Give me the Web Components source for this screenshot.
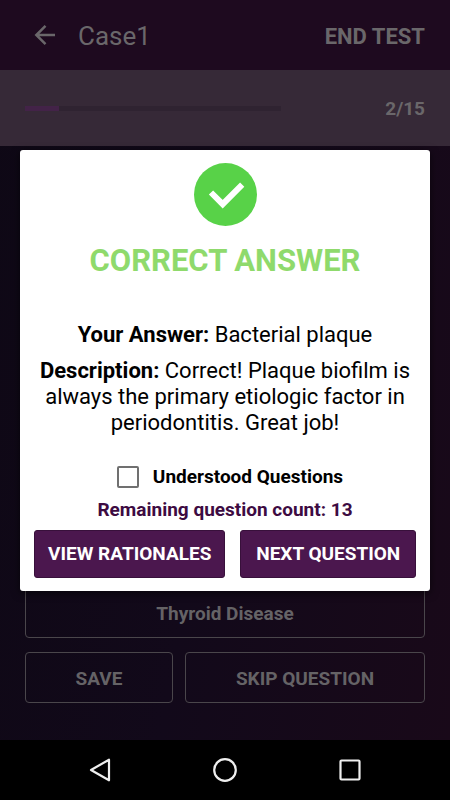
<!DOCTYPE html>
<html lang="en">
<head>
<meta charset="utf-8">
<meta name="viewport" content="width=device-width, initial-scale=1">
<title>Case1</title>
<style>
  html, body { margin: 0; height: 100%; }
  body { font-family: Roboto, "Liberation Sans", sans-serif; background: #000; }
</style>
</head>
<body>
<quiz-screen></quiz-screen>

<script>
const define = (name, html) => {
  const template = document.createElement('template');
  template.innerHTML = html;
  customElements.define(name, class extends HTMLElement {
    constructor() {
      super();
      this.attachShadow({ mode: 'open' }).append(template.content.cloneNode(true));
    }
  });
};

// Top bar: back arrow, case title and a trailing action
define('app-bar', `
  <style>
    :host { display: flex; align-items: center; height: 70px; padding: 0 25px 0 33px; background: #1e0a1f; color: #6a676a; }
    button { border: 0; padding: 0; background: none; color: inherit; font: inherit; }
    .back { display: flex; }
    h1 { flex: 1; margin: 2px 0 0 21px; font-size: 26px; line-height: 32px; font-weight: 400; }
    .end { font-size: 22px; line-height: 26px; font-weight: 700; margin-top: 4px; }
  </style>
  <button class="back" aria-label="Back">
    <svg width="24" height="24" viewBox="0 0 24 24" fill="none" stroke="currentColor" stroke-width="2.500"><path d="M22 12H4M12.500 2.800L3.300 12l9.200 9.200"/></svg>
  </button>
  <h1><slot></slot></h1>
  <button class="end"><slot name="action"></slot></button>
`);

// Progress strip under the top bar
define('quiz-progress', `
  <style>
    :host { display: flex; align-items: center; justify-content: space-between; height: 76px; padding: 0 25px; background: #362937; color: #6a676a; }
    .track { width: 64%; height: 5px; background: #2f2331; }
    .fill { width: 13.4%; height: 100%; background: #432348; }
    span { font-size: 19px; line-height: 24px; font-weight: 700; margin-top: 2px; }
  </style>
  <div class="track" role="progressbar" aria-label="Progress" aria-valuemin="0" aria-valuemax="15" aria-valuenow="2"><div class="fill"></div></div>
  <span><slot></slot></span>
`);

// Outlined button of the dimmed question page
define('outline-button', `
  <style>
    :host { display: block; }
    button { display: block; width: 100%; height: 51px; padding: 2px 0 0; border: 1px solid #4a464b; border-radius: 4px; background: none; color: #656366; font: 700 19px/24px Roboto, sans-serif; }
  </style>
  <button><slot></slot></button>
`);

// Filled button of the dialog
define('solid-button', `
  <style>
    :host { display: block; }
    button { display: block; width: 100%; height: 48px; padding: 0; border: 1px solid #38103b; border-radius: 3px; background: #4b174e; color: #fff; font: 700 19px/24px Roboto, sans-serif; white-space: nowrap; }
  </style>
  <button><slot></slot></button>
`);

define('check-option', `
  <style>
    :host { display: block; }
    label { display: flex; align-items: center; justify-content: center; gap: 14px; padding-left: 10px; font-size: 19px; line-height: 24px; font-weight: 700; }
    input { appearance: none; width: 22px; height: 22px; margin: 0; border: 2px solid #707070; border-radius: 2px; background: #fff; }
    input:checked { background: #4b174e; }
  </style>
  <label><input type="checkbox"><span><slot></slot></span></label>
`);

define('result-dialog', `
  <style>
    :host { display: block; box-sizing: border-box; width: 100%; padding: 13px 14px; border-radius: 3px; background: #fff; color: #000; text-align: center; box-shadow: 0 2px 8px #0009; }
    svg { display: block; margin: 0 auto; }
    h2 { margin: 16px 0 0; color: #8fda6c; font-size: 31px; line-height: 38px; font-weight: 700; }
    .details { display: grid; gap: 10px; margin-top: 42px; font-size: 22px; line-height: 26px; }
    check-option { margin-top: 29px; }
    .remaining { margin-top: 9px; color: #3d0b42; font-size: 19px; line-height: 24px; font-weight: 700; }
    .actions { display: grid; grid-template-columns: 12fr 11fr; gap: 15px; margin-top: 8px; }
  </style>
  <svg width="63" height="63" viewBox="0 0 63 63" aria-hidden="true"><circle cx="31.500" cy="31.500" r="31.500" fill="#58d248"/><path d="M17 29.500l11.700 11.700 19.500-19.500" fill="none" stroke="#fff" stroke-width="6"/></svg>
  <h2><slot name="title"></slot></h2>
  <div class="details"><slot></slot></div>
  <check-option>Understood Questions</check-option>
  <div class="remaining"><slot name="remaining"></slot></div>
  <div class="actions"><slot name="actions"></slot></div>
`);

// Android system navigation
define('system-nav', `
  <style>
    :host { display: grid; grid-template-columns: repeat(3, 125px); justify-content: center; height: 60px; background: #000; }
    button { display: grid; place-items: center; padding: 0; border: 0; background: none; }
    svg { fill: none; stroke: #efefef; stroke-width: 2.200; stroke-linejoin: round; }
  </style>
  <button aria-label="Back"><svg width="26" height="26" viewBox="0 0 26 26"><path d="M22 2.700v20.600L4 13z"/></svg></button>
  <button aria-label="Home"><svg width="26" height="26" viewBox="0 0 26 26"><circle cx="13" cy="13" r="10.800"/></svg></button>
  <button aria-label="Recent apps"><svg width="26" height="26" viewBox="0 0 26 26"><rect x="3.500" y="3.500" width="19" height="19" rx="1"/></svg></button>
`);

define('quiz-screen', `
  <style>
    :host { display: flex; flex-direction: column; min-height: 100vh; }
    .page { position: relative; flex: 1; display: flex; flex-direction: column; background: linear-gradient(100deg, #0e0815, #12091a 50%, #190919); }
    .answers { flex: 1; display: flex; flex-direction: column; justify-content: flex-end; gap: 14px; padding: 20px 25px 37px; }
    .row { display: grid; grid-template-columns: 37fr 60fr; gap: 12px; }
    .modal { position: absolute; inset: 0; display: flex; align-items: center; padding: 0 20px; }
    p { margin: 0; }
  </style>
  <main class="page">
    <app-bar>Case1<span slot="action">END TEST</span></app-bar>
    <quiz-progress>2/15</quiz-progress>
    <div class="answers">
      <outline-button>Thyroid Disease</outline-button>
      <div class="row">
        <outline-button>SAVE</outline-button>
        <outline-button>SKIP QUESTION</outline-button>
      </div>
    </div>
    <div class="modal">
      <result-dialog role="dialog" aria-label="Correct answer">
        <span slot="title">CORRECT ANSWER</span>
        <p><b>Your Answer:</b> Bacterial plaque</p>
        <p><b>Description:</b> Correct! Plaque biofilm is always the primary etiologic factor in periodontitis. Great job!</p>
        <span slot="remaining">Remaining question count: 13</span>
        <solid-button slot="actions">VIEW RATIONALES</solid-button>
        <solid-button slot="actions">NEXT QUESTION</solid-button>
      </result-dialog>
    </div>
  </main>
  <system-nav></system-nav>
`);
</script>
</body>
</html>
